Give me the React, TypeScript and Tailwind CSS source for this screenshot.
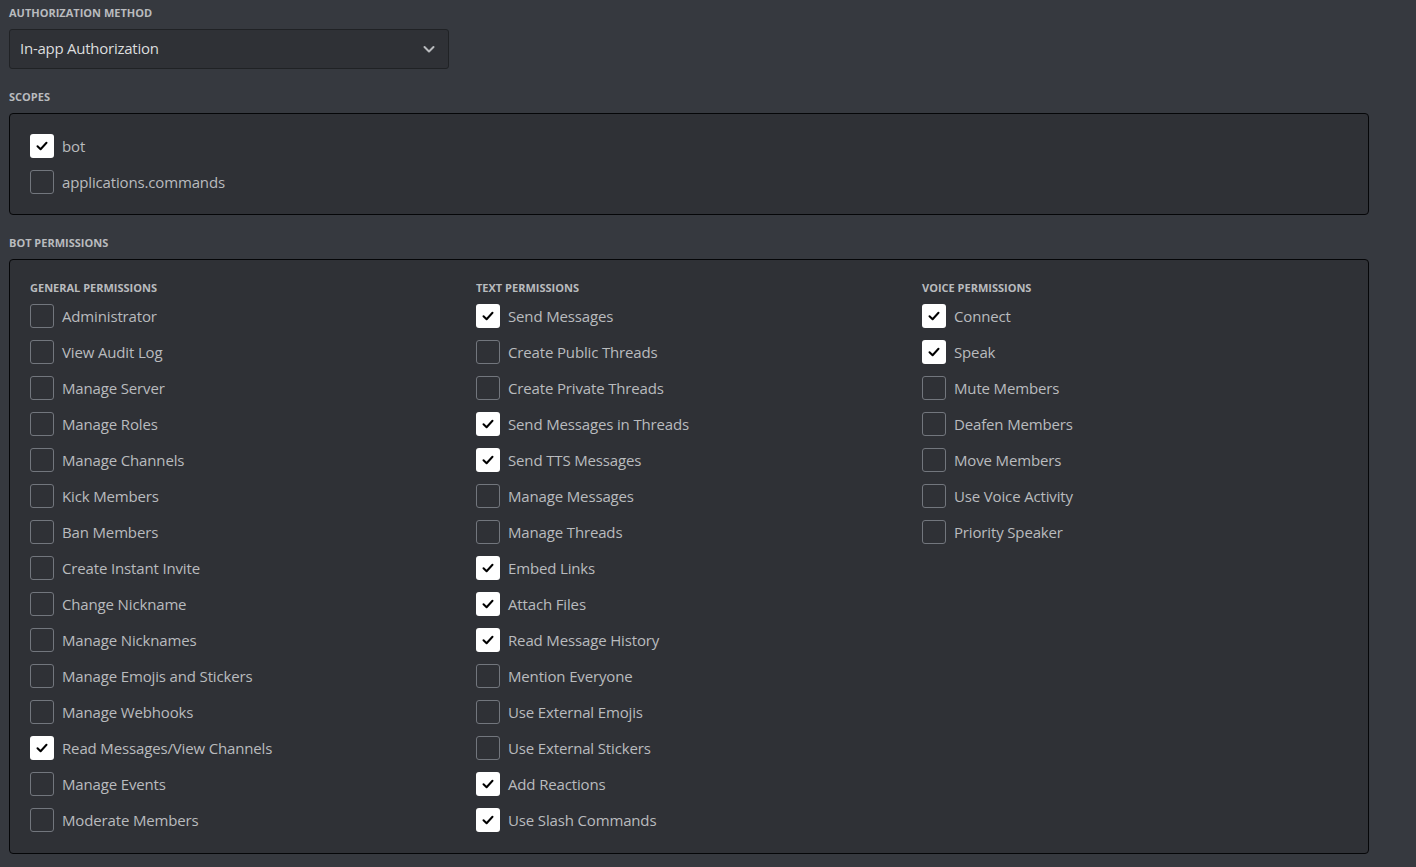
import React from "react";

type Item = [string, boolean];

const general: Item[] = [
  ["Administrator", false],
  ["View Audit Log", false],
  ["Manage Server", false],
  ["Manage Roles", false],
  ["Manage Channels", false],
  ["Kick Members", false],
  ["Ban Members", false],
  ["Create Instant Invite", false],
  ["Change Nickname", false],
  ["Manage Nicknames", false],
  ["Manage Emojis and Stickers", false],
  ["Manage Webhooks", false],
  ["Read Messages/View Channels", true],
  ["Manage Events", false],
  ["Moderate Members", false],
];

const text: Item[] = [
  ["Send Messages", true],
  ["Create Public Threads", false],
  ["Create Private Threads", false],
  ["Send Messages in Threads", true],
  ["Send TTS Messages", true],
  ["Manage Messages", false],
  ["Manage Threads", false],
  ["Embed Links", true],
  ["Attach Files", true],
  ["Read Message History", true],
  ["Mention Everyone", false],
  ["Use External Emojis", false],
  ["Use External Stickers", false],
  ["Add Reactions", true],
  ["Use Slash Commands", true],
];

const voice: Item[] = [
  ["Connect", true],
  ["Speak", true],
  ["Mute Members", false],
  ["Deafen Members", false],
  ["Move Members", false],
  ["Use Voice Activity", false],
  ["Priority Speaker", false],
];

function Check({ label, checked }: { label: string; checked: boolean }) {
  return (
    <div className="flex h-[36px] items-center gap-[8px]">
      {checked ? (
        <div className="flex h-[24px] w-[24px] items-center justify-center rounded-[3px] bg-white">
          <svg width="14" height="14" viewBox="0 0 14 14" fill="none">
            <path d="M2.5 7.2 L5.6 10.2 L11.5 3.8" stroke="#000" strokeWidth="2" strokeLinecap="round" strokeLinejoin="round" />
          </svg>
        </div>
      ) : (
        <div className="h-[24px] w-[24px] rounded-[3px] border border-[#72767d]" />
      )}
      <span className="text-[15px] leading-[20px] tracking-[-0.15px] text-[#b9bbbe]">{label}</span>
    </div>
  );
}

function Label({ children, className = "" }: { children: React.ReactNode; className?: string }) {
  return (
    <div className={"text-[11px] font-bold uppercase leading-[16px] text-[#b9bbbe] " + className}>{children}</div>
  );
}

function Column({ title, items }: { title: string; items: Item[] }) {
  return (
    <div className="flex flex-col">
      <Label className="mb-[2px]">{title}</Label>
      {items.map(([l, c]) => (
        <Check key={l} label={l} checked={c} />
      ))}
    </div>
  );
}

export default function App() {
  return (
    <div
      className="min-h-[867px] w-full bg-[#36393f] px-[9px] pt-[5px]"
      style={{ fontFamily: '"Open Sans", "Noto Sans", sans-serif' }}
    >
      <Label>Authorization Method</Label>
      <div className="mt-[8px] flex h-[40px] w-[440px] items-center justify-between rounded-[3px] border border-[#202225] bg-[#2f3136] pl-[10px] pr-[12px]">
        <span className="-mt-[2px] text-[15px] tracking-[-0.25px] text-[#dcddde]">In-app Authorization</span>
        <svg width="14" height="14" viewBox="0 0 14 14" fill="none">
          <path d="M2.5 5 L7 9.5 L11.5 5" stroke="#b9bbbe" strokeWidth="2" strokeLinecap="round" strokeLinejoin="round" />
        </svg>
      </div>
      <Label className="mt-[20px]">Scopes</Label>
      <div className="mt-[8px] w-[1360px] rounded-[4px] border border-[#050608] bg-[#2f3136] px-[20px] py-[14px]">
        <Check label="bot" checked />
        <Check label="applications.commands" checked={false} />
      </div>
      <Label className="mt-[20px]">Bot Permissions</Label>
      <div className="mt-[8px] grid w-[1360px] grid-cols-[446px_446px_446px] rounded-[4px] border border-[#050608] bg-[#2f3136] px-[20px] pb-[15px] pt-[20px]">
        <Column title="General Permissions" items={general} />
        <Column title="Text Permissions" items={text} />
        <Column title="Voice Permissions" items={voice} />
      </div>
    </div>
  );
}
